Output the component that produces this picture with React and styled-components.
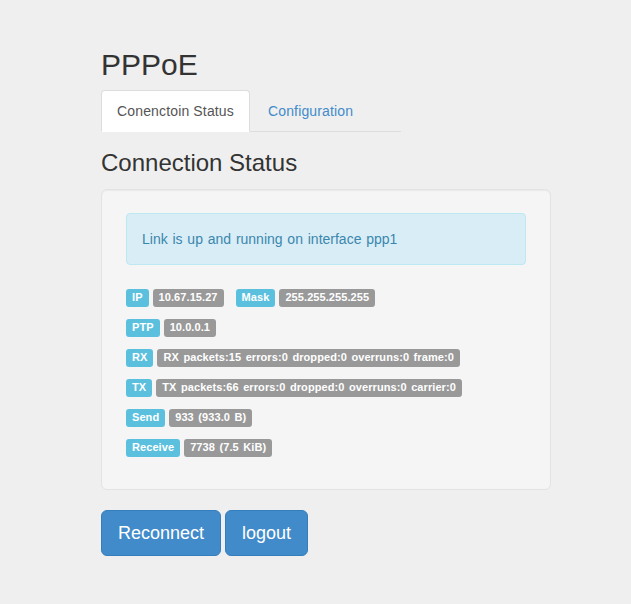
import React from "react";
import styled, { createGlobalStyle } from "styled-components";

const Global = createGlobalStyle`
  html, body { margin: 0; padding: 0; background: #efefef; }
  body {
    font-family: "Liberation Sans", Arial, Helvetica, sans-serif;
    font-size: 14px;
    line-height: 20px;
    color: #333;
  }
  * { box-sizing: border-box; }
`;

const Page = styled.div`
  padding: 48px 0 40px 101px;
  width: 551px;
`;

const Title = styled.h2`
  margin: 0 0 9px;
  font-size: 30px;
  line-height: 33px;
  font-weight: 500;
  color: #333;
`;

const Tabs = styled.ul`
  display: flex;
  list-style: none;
  margin: 0;
  padding: 0;
  width: 300px;
  border-bottom: 1px solid #ddd;
`;

const Tab = styled.li`
  margin: 0 2px -1px 0;
`;

const TabLink = styled.a`
  display: block;
  padding: 10px 15px;
  line-height: 20px;
  letter-spacing: 0.15px;
  border: 1px solid ${(p) => (p.$active ? "#ddd" : "transparent")};
  border-bottom-color: transparent;
  border-radius: 4px 4px 0 0;
  background: ${(p) => (p.$active ? "#fff" : "transparent")};
  color: ${(p) => (p.$active ? "#555" : "#428bca")};
  text-decoration: none;
  cursor: pointer;
`;

const Subtitle = styled.h3`
  margin: 18px 0 13px;
  font-size: 24px;
  line-height: 26px;
  font-weight: 500;
  color: #333;
`;

const Well = styled.div`
  width: 450px;
  padding: 23px 24px 24px;
  background: #f5f5f5;
  border: 1px solid #e3e3e3;
  border-radius: 6px;
  box-shadow: inset 0 1px 1px rgba(0, 0, 0, 0.05);
  margin-bottom: 20px;
`;

const Alert = styled.div`
  padding: 15px;
  margin-bottom: 20px;
  border: 1px solid #bce8f1;
  border-radius: 4px;
  background: #d9edf7;
  color: #3a87ad;
  line-height: 20px;
  word-spacing: 0.9px;
`;

const Row = styled.div`
  display: flex;
  align-items: center;
  gap: 4px;
  padding: 4px 0;
  margin-bottom: 4px;
`;

const Label = styled.span`
  display: inline-block;
  padding: 3px 6px 4px;
  font-size: 11px;
  line-height: 11px;
  font-weight: bold;
  letter-spacing: 0.08px;
  word-spacing: 1.4px;
  color: #fff;
  white-space: nowrap;
  border-radius: 3px;
  background: ${(p) => (p.$kind === "info" ? "#5bc0de" : "#999")};
  margin-left: ${(p) => (p.$spaced ? "8px" : "0")};
`;

const Actions = styled.div`
  display: flex;
  gap: 4px;
`;

const Button = styled.button`
  font-family: inherit;
  font-size: 18px;
  line-height: 24px;
  padding: 10px 16px;
  color: #fff;
  background: #428bca;
  border: 1px solid #357ebd;
  border-radius: 6px;
  cursor: pointer;
`;

const rows = [
  [
    ["IP", "10.67.15.27"],
    ["Mask", "255.255.255.255"],
  ],
  [["PTP", "10.0.0.1"]],
  [["RX", "RX packets:15 errors:0 dropped:0 overruns:0 frame:0"]],
  [["TX", "TX packets:66 errors:0 dropped:0 overruns:0 carrier:0"]],
  [["Send", "933 (933.0 B)"]],
  [["Receive", "7738 (7.5 KiB)"]],
];

export default function App() {
  return (
    <>
      <Global />
      <Page>
        <Title>PPPoE</Title>
        <Tabs>
          <Tab>
            <TabLink $active>Conenctoin Status</TabLink>
          </Tab>
          <Tab>
            <TabLink>Configuration</TabLink>
          </Tab>
        </Tabs>
        <Subtitle>Connection Status</Subtitle>
        <Well>
          <Alert>Link is up and running on interface ppp1</Alert>
          {rows.map((pairs, i) => (
            <Row key={i}>
              {pairs.map(([k, v], j) => (
                <React.Fragment key={k}>
                  <Label $kind="info" $spaced={j > 0}>
                    {k}
                  </Label>
                  <Label>{v}</Label>
                </React.Fragment>
              ))}
            </Row>
          ))}
        </Well>
        <Actions>
          <Button>Reconnect</Button>
          <Button>logout</Button>
        </Actions>
      </Page>
    </>
  );
}
